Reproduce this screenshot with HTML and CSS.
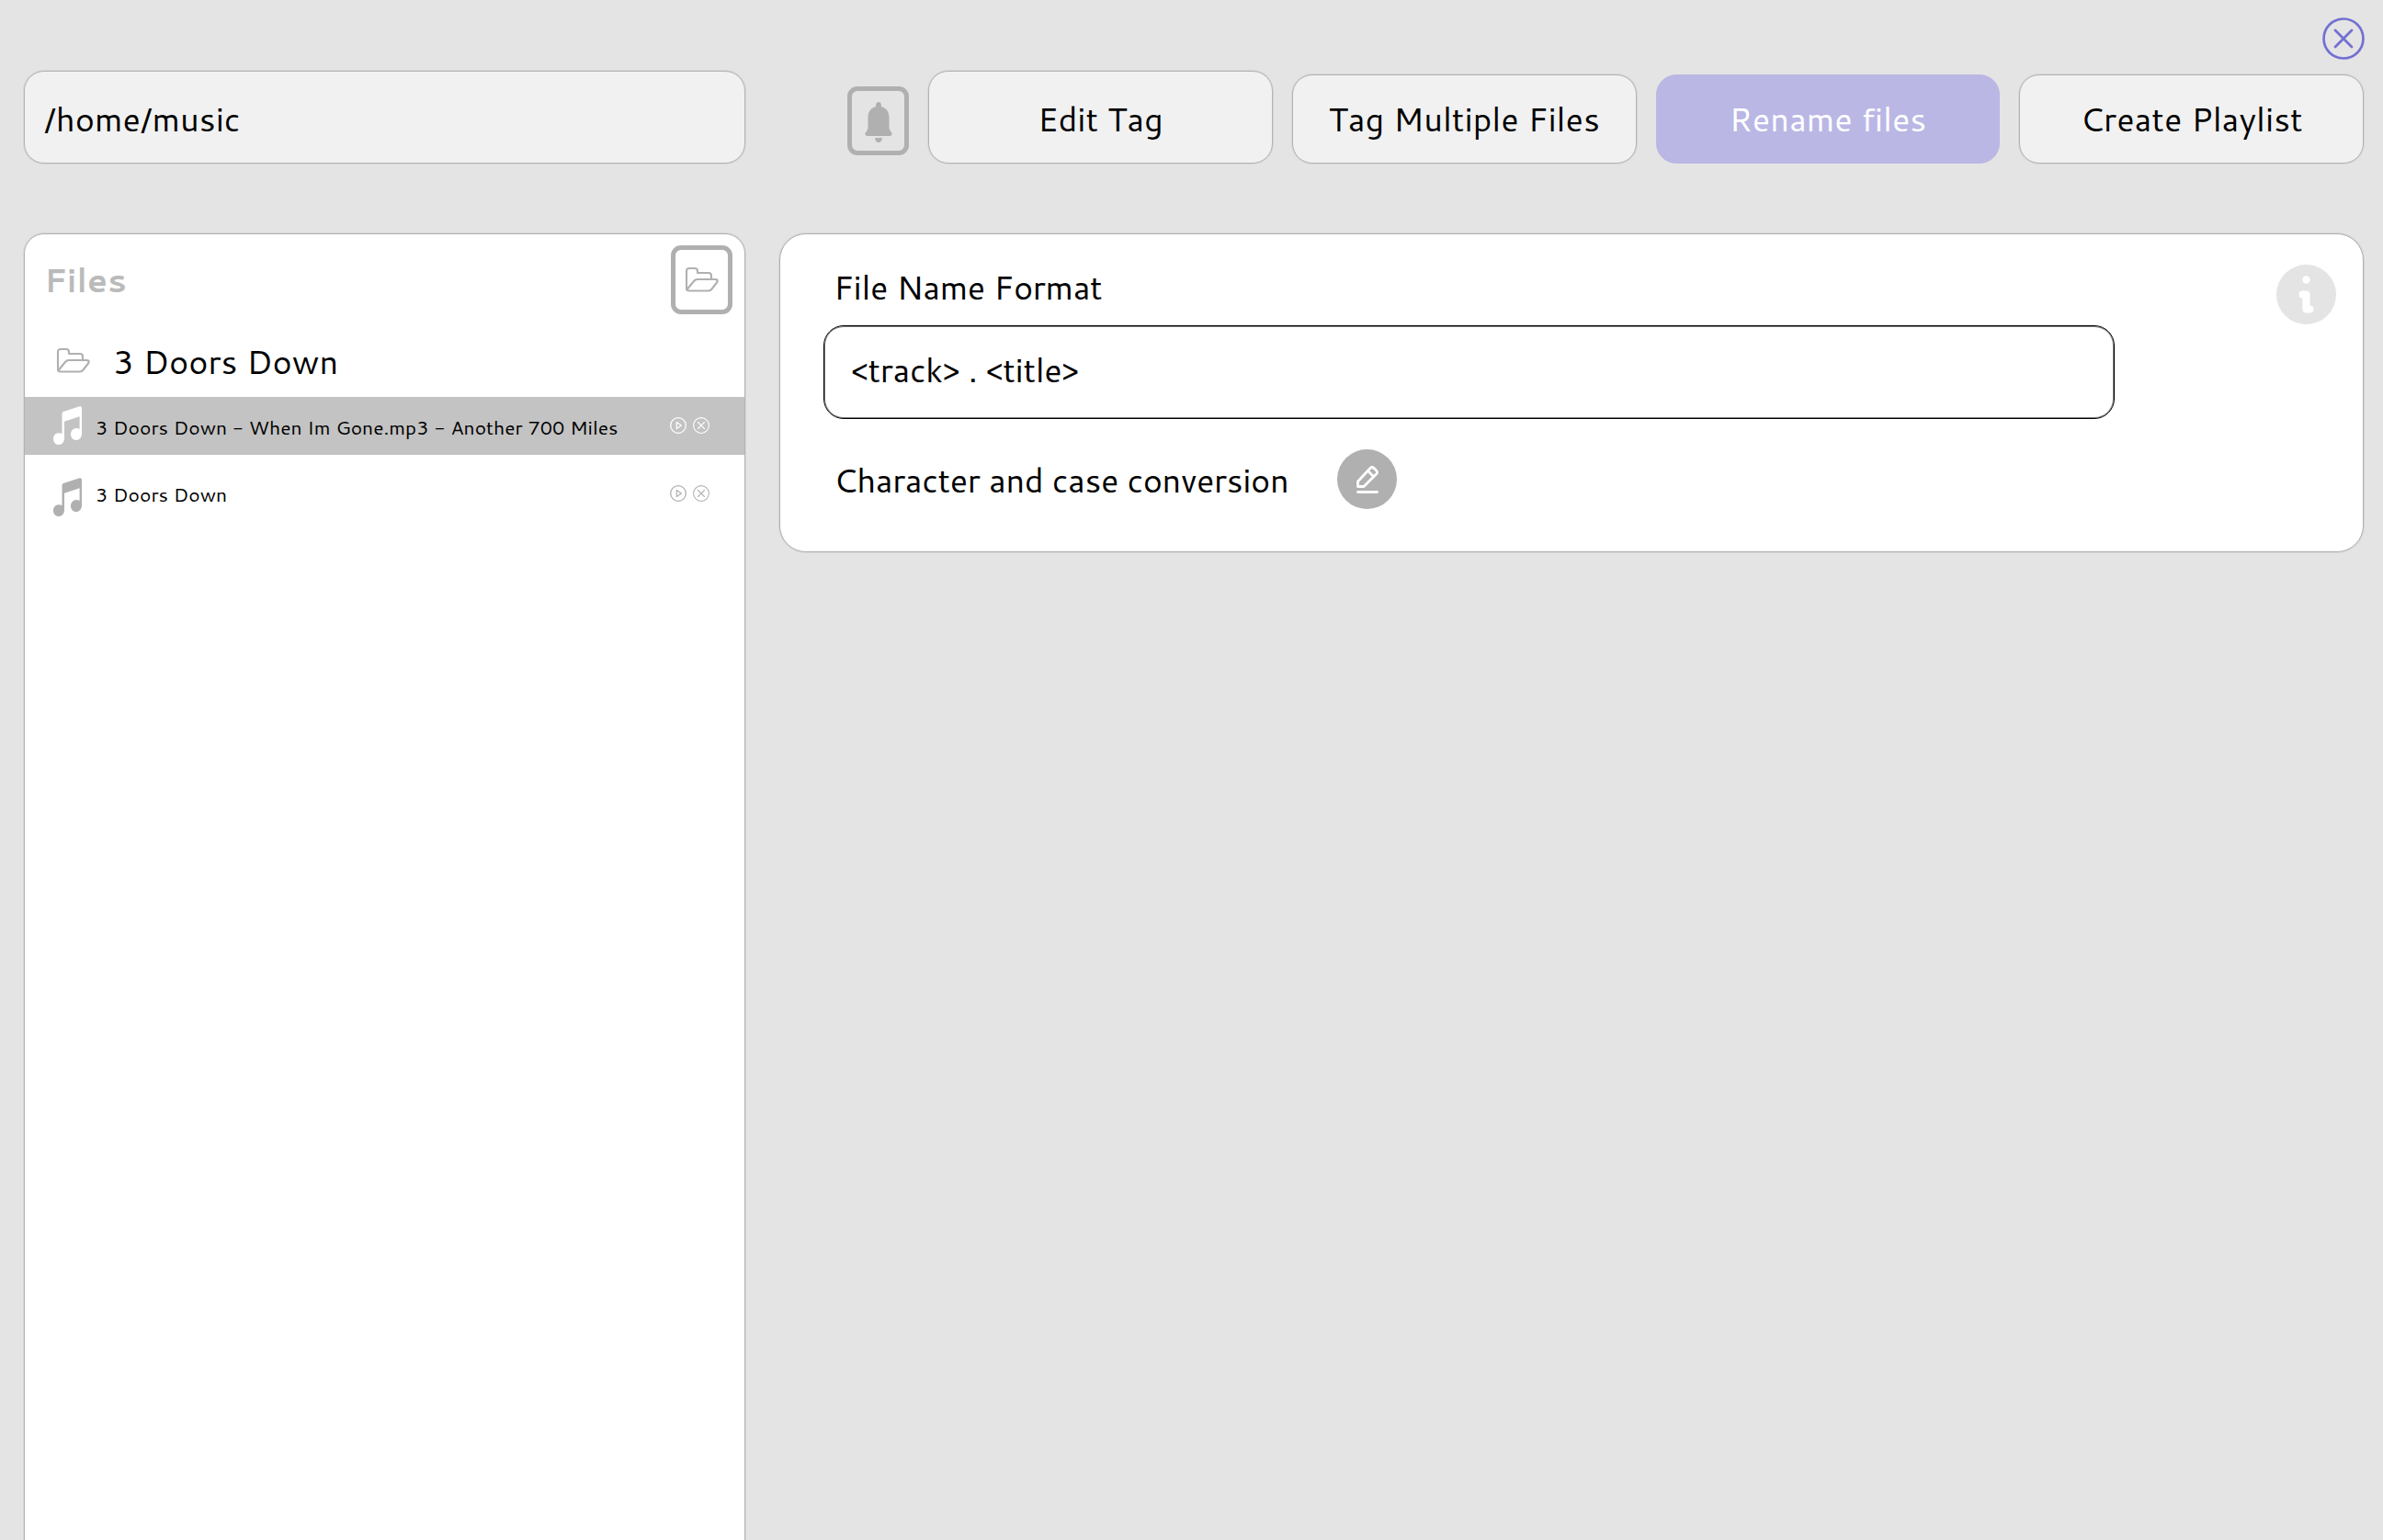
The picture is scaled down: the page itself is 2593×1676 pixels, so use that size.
FILE: index.html
```html
<!DOCTYPE html>
<html lang="en">
<head>
<meta charset="utf-8">
<title>Rename files</title>
<link rel="stylesheet" href="styles.css">
</head>
<body>
<svg class="defs" aria-hidden="true">
  <symbol id="folder" viewBox="0 0 37 28"><path d="M2 24V5Q2 2 5 2H11Q14 2 14 5V7H26Q29 7 29 10V14M2 24Q2 26.500 5 26.500H26Q28 26.500 29.500 24.500L35 17.500Q37 14 33 14H14Q11.500 14 10 16L3 24.500" fill="none" stroke="currentColor" stroke-width="2.100" stroke-linejoin="round" stroke-linecap="round"/></symbol>
  <symbol id="note" viewBox="0 0 31 42"><path d="M9.500 8Q9.500 6.500 11 6L28.500 .3Q31 -.3 31 2V30C31 34 28.500 37 25 37C21.500 37 19 34.200 19 30.700C19 27 21.500 24 25 24Q27.500 24 28.600 25V11.200L12 16.800V35C12 39 9.500 42 6 42C2.500 42 0 39.200 0 35.700C0 32 2.500 29.300 6 29.300Q8.500 29.300 9.500 30.300Z" fill="currentColor"/></symbol>
  <symbol id="play" viewBox="0 0 18 18"><circle cx="9" cy="9" r="8.300" fill="none" stroke="currentColor" stroke-width="1.300"/><path d="M7.300 5.400V12.600L12.400 9Z" fill="none" stroke="currentColor" stroke-width="1.200" stroke-linejoin="round"/></symbol>
  <symbol id="cross" viewBox="0 0 18 18"><circle cx="9" cy="9" r="8.400" fill="none" stroke="currentColor" stroke-width="1.050"/><path d="M5.500 5.500L12.500 12.500M12.500 5.500L5.500 12.500" fill="none" stroke="currentColor" stroke-width="1.100" stroke-linecap="round"/></symbol>
</svg>
<div class="window">
  <div class="titlebar"><svg class="close" viewBox="0 0 18 18"><use href="#cross"/></svg></div>
  <header class="toolbar">
    <div class="path"><span>/home/music</span></div>
    <div class="bell"><svg width="30" height="44" viewBox="0 0 30 44"><path d="M15 0Q18 0 18 5C23.500 6.500 26.500 11 26.500 17V28Q26.500 30.500 28.500 32.500Q31 35 28 37H2Q-1 35 1.500 32.500Q3.500 30.500 3.500 28V17C3.500 11 6.500 6.500 12 5Q12 0 15 0ZM11 39H19Q18.500 44 15 44Q11.500 44 11 39Z" fill="currentColor"/></svg></div>
    <nav class="tabs">
      <div class="tab tall"><span>Edit Tag</span></div>
      <div class="tab"><span>Tag Multiple Files</span></div>
      <div class="tab active"><span>Rename files</span></div>
      <div class="tab"><span>Create Playlist</span></div>
    </nav>
  </header>
  <main class="content">
    <section class="files">
      <div class="files-head"><span>Files</span><div class="open"><svg width="37" height="28"><use href="#folder"/></svg></div></div>
      <div class="dir"><svg width="37" height="28"><use href="#folder"/></svg><span>3 Doors Down</span></div>
      <div class="row selected"><svg class="note" width="31" height="42"><use href="#note"/></svg><span>3 Doors Down - When Im Gone.mp3 - Another 700 Miles</span><div class="acts"><svg width="18" height="18"><use href="#play"/></svg><svg width="18" height="18"><use href="#cross"/></svg></div></div>
      <div class="row second"><svg class="note" width="31" height="42"><use href="#note"/></svg><span>3 Doors Down</span><div class="acts"><svg width="18" height="18"><use href="#play"/></svg><svg width="18" height="18"><use href="#cross"/></svg></div></div>
    </section>
    <section class="panel">
      <div class="form">
        <span class="label">File Name Format</span>
        <div class="field"><span>&lt;track&gt; . &lt;title&gt;</span></div>
        <div class="convert"><span>Character and case conversion</span>
          <svg width="65" height="65" viewBox="0 0 65 65"><circle cx="32.500" cy="32.500" r="32.500" fill="#b0b0b0"/><g fill="none" stroke="#fff" stroke-width="2.800" stroke-linejoin="round" stroke-linecap="round"><path d="M22.500 40.500V35L36 20.500Q38 18.500 40 20.500L42.500 23Q44.500 25 42.500 27L29 40.500ZM33.500 23.500L39.500 29.500M22.500 46.500H43.500"/></g></svg></div>
      </div>
      <svg class="info" width="65" height="65" viewBox="0 0 65 65"><circle cx="32.500" cy="32.500" r="32.500" fill="#e4e4e4"/><circle cx="32.500" cy="16.500" r="4.200" fill="#fff"/><path d="M28.500 32.500H32.500V48.500H36.500" fill="none" stroke="#fff" stroke-width="8" stroke-linecap="round" stroke-linejoin="round"/></svg>
    </section>
  </main>
</div>
</body>
</html>
```
FILE: styles.css
```css
* { box-sizing: border-box; }
body { margin: 0; background: #e4e4e4; color: #000; font: 36px/41px Cantarell, "Noto Sans", sans-serif; overflow: hidden; }
span { white-space: pre; }
svg { display: block; flex: none; }
.defs { position: absolute; width: 0; height: 0; }
.window { height: 1676px; padding: 0 21px 0 26px; display: flex; flex-direction: column; overflow: hidden; }
.titlebar { height: 77px; padding-top: 19px; display: flex; justify-content: flex-end; flex: none; }
.close { width: 46px; height: 46px; margin-right: -1px; color: #7370d2; }
.toolbar { height: 101px; display: flex; align-items: flex-end; flex: none; }
.path, .tab { border: 1px solid #b3b3b3; background: #f1f1f1; border-radius: 22px; display: flex; box-shadow: 0 0 0 1px rgba(176, 176, 176, .25); }
.path { width: 785px; height: 101px; padding: 31px 0 0 21px; }
.bell, .open { border: 5px solid #b0b0b0; border-radius: 11px; width: 67px; height: 75px; color: #b0b0b0; display: flex; justify-content: center; flex: none; }
.bell { margin: 0 21px 9px 111px; padding-top: 12px; }
.tabs { flex: 1; display: flex; gap: 21px; align-items: flex-end; }
.tab { flex: 1 1 0; height: 97px; padding-bottom: 27px; justify-content: center; align-items: flex-end; }
.tab.tall { height: 101px; }
.tab.active { background: #bab7e5; border-color: #bab7e5; color: #fff; box-shadow: none; }
.content { margin-top: 76px; flex: 1; display: flex; gap: 37px; align-items: flex-start; min-height: 0; }
.files { width: 785px; height: 1450px; background: #fff; border: 1px solid #b3b3b3; border-radius: 22px; box-shadow: 0 0 0 1px rgba(176, 176, 176, .25); flex: none; }
.files-head { height: 101px; padding: 12px 13px 0 21px; display: flex; justify-content: space-between; }
.files-head span { margin-top: 17px; color: #bababa; font-weight: 700; }
.open { padding-top: 18px; }
.dir { height: 76px; padding: 22px 0 0 34px; display: flex; color: #b0b0b0; }
.dir span { color: #000; margin: -5px 0 0 25px; }
.row { height: 63px; padding: 0 38px 0 31px; display: flex; align-items: flex-start; font-size: 21px; line-height: 24px; color: #b0b0b0; }
.row .note { margin: 10px 15px 0 0; }
.row span { color: #000; margin-top: 21px; }
.row.selected { background: #c3c3c3; color: #fff; }
.row.second { margin-top: 15px; }
.acts { margin-left: auto; display: flex; gap: 7px; padding-top: 22px; }
.second .acts { padding-top: 18px; }
.row.second span { margin-top: 16px; }
.panel { flex: 1; height: 347px; background: #fff; border: 1px solid #b0b0b0; border-radius: 29px; box-shadow: 0 0 0 1px rgba(176, 176, 176, .25); display: flex; justify-content: space-between; padding: 0 29px 0 47px; letter-spacing: -.36px; }
.form { width: 1405px; display: flex; flex-direction: column; }
.label { margin: 37px 0 0 11px; }
.field { height: 102px; margin-top: 21px; border: 1px solid #000; border-radius: 22px; box-shadow: inset 0 0 0 1px rgba(0, 0, 0, .5); padding: 27px 0 0 29px; display: flex; }
.convert { display: flex; margin: 33px 0 0 11px; gap: 52.500px; }
.convert span { margin-top: 13px; }
.info { margin-top: 33px; }
```
